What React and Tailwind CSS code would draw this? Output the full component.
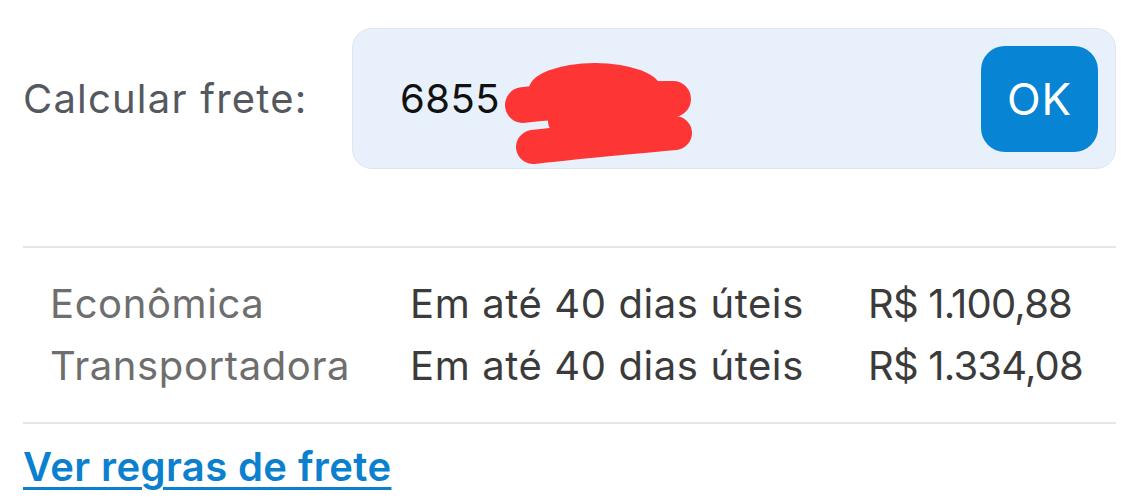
import { useState } from 'react';

const options = [
  { name: 'Econômica', eta: 'Em até 40 dias úteis', price: 'R$ 1.100,88' },
  { name: 'Transportadora', eta: 'Em até 40 dias úteis', price: 'R$ 1.334,08' },
];

// hand-drawn red mark covering the rest of the CEP
function Scribble() {
  return (
    <svg
      className="pointer-events-none absolute left-[150px] top-[30px]"
      width="200"
      height="112"
      viewBox="0 0 200 112"
    >
      <g fill="#fe3535" stroke="#fe3535" strokeLinecap="round" strokeLinejoin="round">
        <ellipse cx="92" cy="30" rx="66" ry="26" stroke="none" />
        <path d="M20 46 C70 40 120 40 170 40" strokeWidth="36" fill="none" />
        <path d="M30 88 C80 82 130 78 172 74" strokeWidth="34" fill="none" />
        <path d="M60 62 L150 58" strokeWidth="30" fill="none" />
      </g>
    </svg>
  );
}

export default function App() {
  const [cep, setCep] = useState('6855');

  return (
    <div className="h-[500px] w-[1139px] overflow-hidden bg-white pl-[23px] pr-[23px] font-['Inter','Liberation_Sans',sans-serif]">
      <div className="mt-[28px] flex h-[141px] items-center">
        <p className="w-[329px] shrink-0 text-[40px] tracking-[1.2px] text-[#55595f]">Calcular frete:</p>
        <div className="relative flex h-full min-w-0 flex-1 items-center rounded-[20px] border border-[#dfe5ee] bg-[#e8f0fc] pl-[47px] pr-[17px]">
          <input
            value={cep}
            onChange={(e) => setCep(e.target.value)}
            className="w-0 min-w-0 flex-1 bg-transparent text-[40px] tracking-[0.5px] text-[#111] outline-none"
          />
          <Scribble />
          <button className="flex h-[106px] w-[117px] shrink-0 items-center justify-center rounded-[24px] bg-[#0784d3] text-[44px] tracking-[1px] text-white">
            OK
          </button>
        </div>
      </div>

      <div className="mt-[77px] border-t-2 border-[#e6e6e6] py-[25px]">
        {options.map((opt) => (
          <div
            key={opt.name}
            className="grid grid-cols-[360px_458px_1fr] pl-[27px] text-[40px] leading-[62px] tracking-[0.6px]"
          >
            <span className="text-[#6e6e6e]">{opt.name}</span>
            <span className="text-[#3b3b3b]">{opt.eta}</span>
            <span className="tracking-[-0.8px] text-[#3b3b3b]">{opt.price}</span>
          </div>
        ))}
      </div>

      <div className="border-t-2 border-[#e6e6e6] pt-[19px]">
        <a
          href="#"
          className="text-[40px] font-semibold leading-[48px] tracking-[0.4px] text-[#0a80cf] underline decoration-[3px] underline-offset-[6px]"
        >
          Ver regras de frete
        </a>
      </div>
    </div>
  );
}
